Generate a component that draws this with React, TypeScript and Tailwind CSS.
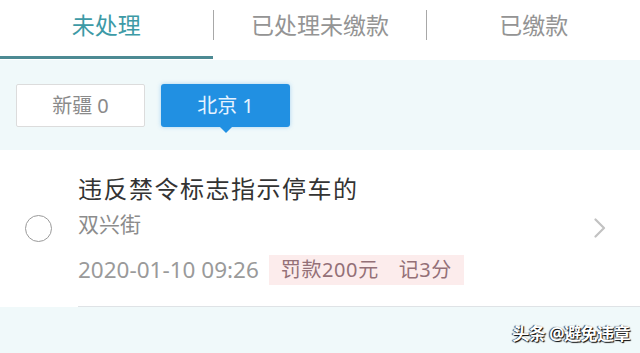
const tabs = ["未处理", "已处理未缴款", "已缴款"];

export default function App() {
  return (
    <div
      className="relative w-[640px] h-[353px] overflow-hidden bg-[#f0f9fa]"
      style={{ fontFamily: '"Noto Sans", "Noto Sans CJK SC", sans-serif' }}
    >
      {/* Tabs */}
      <div className="flex h-[60px] bg-white">
        {tabs.map((t, i) => (
          <div key={t} className="contents">
            {i > 0 && <div className="w-px h-[30px] mt-[10px] bg-[#a8a8a8]" />}
            <div className="flex-1 flex flex-col items-center">
              <span
                className={
                  "mt-[11px] text-[23px] leading-[28px] " +
                  (i === 0 ? "text-[#3d9aa6]" : "text-[#949494]")
                }
              >
                {t}
              </span>
              {i === 0 && <div className="mt-auto mb-px h-[3px] w-full bg-[#4d8a93]" />}
            </div>
          </div>
        ))}
      </div>

      {/* City filter */}
      <div className="flex gap-4 px-4 pt-[24px] h-[90px]">
        <div className="w-[129px] h-[43px] flex items-center justify-center bg-white border border-[#dcdcdc] rounded-[2px] text-[20px] text-[#8a8a8a]">
          新疆 0
        </div>
        <div className="relative w-[129px] h-[43px] flex items-center justify-center bg-[#2190e2] rounded-[3px] text-[20px] text-[#e6f3ff] shadow-[0_0_4px_rgba(33,144,226,0.35)]">
          北京 1
          <span className="absolute left-1/2 -translate-x-1/2 top-full w-0 h-0 border-x-[6px] border-x-transparent border-t-[6px] border-t-[#2190e2]" />
        </div>
      </div>

      {/* Violation row */}
      <div className="flex bg-white h-[157px]">
        <div className="w-[78px] flex items-center justify-center pr-[2px]">
          <div className="w-[27px] h-[27px] rounded-full border-[1.5px] border-[#9a9a9a]" />
        </div>
        <div className="flex-1 flex items-center border-b border-[#dfe3e6]">
          <div className="flex-1 flex flex-col pt-[1px]">
            <div className="text-[24px] leading-[32px] tracking-[1.5px] text-[#333]">违反禁令标志指示停车的</div>
            <div className="mt-[5px] text-[21px] leading-[28px] text-[#8c8c8c]">双兴街</div>
            <div className="mt-[17px] flex items-center gap-[10px]">
              <span className="text-[22.5px] leading-[30px] text-[#9a9a9a]">2020-01-10 09:26</span>
              <span className="h-[30px] px-[12px] flex items-center gap-[20px] bg-[#fcecec] text-[20px] tracking-[0.6px] text-[#947077]">
                <span>罚款200元</span>
                <span>记3分</span>
              </span>
            </div>
          </div>
          <svg width="12" height="20" viewBox="0 0 12 20" className="mr-[34px]" fill="none">
            <path d="M1.5 1.5 L10 10 L1.5 18.5" stroke="#c2c2c2" strokeWidth="2.2" strokeLinecap="round" strokeLinejoin="round" />
          </svg>
        </div>
      </div>

      {/* Watermark */}
      <div className="absolute right-[10px] bottom-[7px] text-[17px] tracking-[-0.5px] font-bold text-white [text-shadow:1px_1px_1px_#000,-1px_0_1px_#333]">
        头条 @避免违章
      </div>
    </div>
  );
}
